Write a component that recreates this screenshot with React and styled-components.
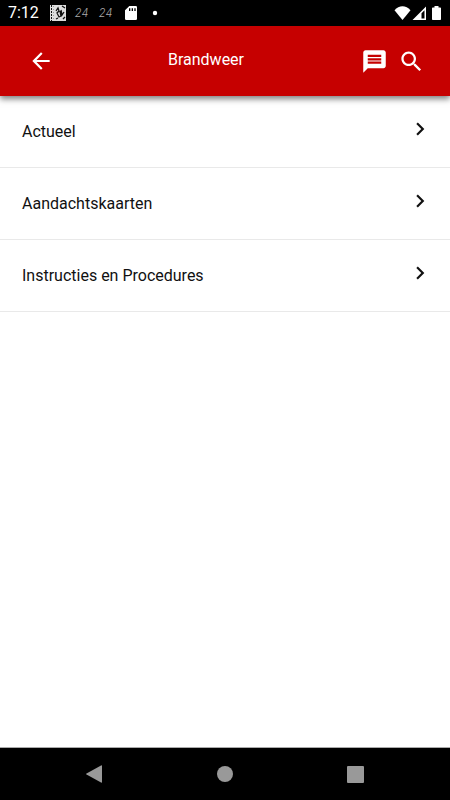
import React from "react";
import styled, { createGlobalStyle } from "styled-components";

const GlobalStyle = createGlobalStyle`
  *, *::before, *::after { box-sizing: border-box; }
  body { margin: 0; background: #fff; font-family: Roboto, "Noto Sans", sans-serif; }
`;

const Screen = styled.div`
  display: flex;
  flex-direction: column;
  min-height: 100vh;
  background: #fff;
`;

const StatusBar = styled.div`
  display: flex;
  align-items: center;
  justify-content: space-between;
  height: 26px;
  padding: 0 6px 0 8px;
  background: #000;
  color: #fff;
`;

const StatusGroup = styled.div`
  display: flex;
  align-items: center;
  gap: ${(p) => p.$gap}px;
`;

const Clock = styled.time`
  font-size: 16px;
  line-height: 28px;
  margin-right: 2px;
`;

const Counter = styled.span`
  width: 15px;
  font-family: Inter, sans-serif;
  font-size: 11px;
  font-style: italic;
  font-weight: 300;
  line-height: 26px;
  color: #aaa;
`;

const AppBar = styled.header`
  display: grid;
  grid-template-columns: 1fr auto 1fr;
  align-items: center;
  height: 70px;
  padding: 0 23px 0 25px;
  background: #c60000;
  color: #fff;
  box-shadow: 0 3px 6px rgba(0, 0, 0, 0.5);
  z-index: 1;
`;

const Title = styled.h1`
  margin: 0;
  padding: 0 40px 2px 0;
  font-size: 16px;
  line-height: 24px;
  font-weight: 400;
`;

const Actions = styled.div`
  display: flex;
  justify-content: flex-end;
  gap: 6px;
`;

const IconButton = styled.button`
  display: grid;
  place-items: center;
  width: 31px;
  height: 40px;
  padding: 0;
  border: 0;
  background: none;
  color: inherit;
  cursor: pointer;
`;

const Icon = styled.svg`
  display: block;
  width: ${(p) => p.$size}px;
  height: ${(p) => p.$size}px;
  fill: currentColor;
`;

const Menu = styled.ul`
  flex: 1;
  margin: 0;
  padding: 0;
  list-style: none;
`;

const MenuItem = styled.li`
  border-bottom: 1px solid #e9e9e9;
`;

const MenuLink = styled.a`
  display: flex;
  align-items: flex-start;
  justify-content: space-between;
  height: 71px;
  padding: 20px 17px 0 22px;
  color: #111;
  text-decoration: none;
`;

const MenuLabel = styled.span`
  font-size: 16px;
  line-height: 32px;
`;

const NavBar = styled.nav`
  display: grid;
  grid-template-columns: repeat(3, 130px);
  justify-content: center;
  justify-items: center;
  align-items: center;
  height: 53px;
  background: #000;
  border-top: 1px solid #aaa;
  color: #999;
`;

const items = ["Actueel", "Aandachtskaarten", "Instructies en Procedures"];

export default function App() {
  return (
    <Screen>
      <GlobalStyle />
      <StatusBar>
        <StatusGroup $gap={9}>
          <Clock>7:12</Clock>
          <Icon $size={16} viewBox="0 0 16 16" aria-hidden="true">
            <path fill="#ddd" d="M0 0h16v16H0z" />
            <g fill="none" stroke="#111">
              <path d="M1.500 0v16" strokeDasharray="2 1" />
              <path d="M3.500 1v14" stroke="#999" strokeDasharray="1 2" />
              <path d="M6 6l2-3 1 3-2 2 2 4 2-1-1-5M11 5l1 5 2-3M12 1l3 2M6 14l2-1M13 14l2-2" strokeWidth="1.300" />
            </g>
          </Icon>
          <Counter>24</Counter>
          <Counter>24</Counter>
          <Icon $size={16} viewBox="0 0 24 24" aria-hidden="true">
            <path d="M19 1.500H9.500L3 8v12.500a2 2 0 0 0 2 2h14a2 2 0 0 0 2-2v-17a2 2 0 0 0-2-2z" />
            <path fill="#000" d="M9 5h2v4H9zM13 5h2v4h-2zM17 5h2v4h-2z" />
          </Icon>
          <Icon $size={14} viewBox="0 0 14 14" aria-hidden="true">
            <circle cx="7" cy="7" r="2.200" />
          </Icon>
        </StatusGroup>
        <StatusGroup $gap={1}>
          <Icon $size={17} viewBox="0 0 17 17" aria-hidden="true">
            <path d="M.5 5.200C5-.1 12-.1 16.500 5.200L8.500 15z" />
          </Icon>
          <Icon $size={15} viewBox="0 0 15 15" aria-hidden="true">
            <path fillRule="evenodd" d="M.5 14L14 .5V14zM9.500 7.200v5.300h3V4.200z" />
          </Icon>
          <Icon $size={16} viewBox="0 0 16 16" aria-hidden="true">
            <path d="M6.500 1h4v1.500h1.700q.8 0 .8.800v10.900q0 .8-.8.800H4.800q-.8 0-.8-.8V3.300q0-.8.800-.8h1.700z" />
          </Icon>
        </StatusGroup>
      </StatusBar>
      <AppBar>
        <IconButton type="button" aria-label="Terug">
          <Icon $size={26} viewBox="0 0 24 24">
            <path d="M20 11H7.830l5.590-5.590L12 4l-8 8 8 8 1.410-1.410L7.830 13H20v-2z" />
          </Icon>
        </IconButton>
        <Title>Brandweer</Title>
        <Actions>
          <IconButton type="button" aria-label="Berichten">
            <Icon $size={27} viewBox="0 0 24 24">
              <path d="M20 2H4c-1.100 0-1.990.9-1.990 2L2 22l4-4h14c1.100 0 2-.9 2-2V4c0-1.100-.9-2-2-2zM6 6h12v2H6V6zm12 8H6v-2h12v2zm0-3H6V9h12v2z" />
            </Icon>
          </IconButton>
          <IconButton type="button" aria-label="Zoeken">
            <Icon $size={27} viewBox="0 0 24 24">
              <path d="M15.500 14h-.79l-.28-.27C15.410 12.590 16 11.110 16 9.500 16 5.910 13.090 3 9.500 3S3 5.910 3 9.500 5.910 16 9.500 16c1.610 0 3.090-.59 4.230-1.570l.27.28v.79l5 4.990L20.490 19l-4.990-5zm-6 0C7.010 14 5 11.990 5 9.500S7.010 5 9.500 5 14 7.010 14 9.500 11.990 14 9.500 14z" />
            </Icon>
          </IconButton>
        </Actions>
      </AppBar>
      <Menu>
        {items.map((label) => (
          <MenuItem key={label}>
            <MenuLink href="#">
              <MenuLabel>{label}</MenuLabel>
              <Icon $size={26} viewBox="0 0 24 24" aria-hidden="true">
                <path d="M10 6L8.590 7.410 13.170 12l-4.580 4.590L10 18l6-6z" />
              </Icon>
            </MenuLink>
          </MenuItem>
        ))}
      </Menu>
      <NavBar>
        <IconButton type="button" aria-label="Vorige">
          <Icon $size={18} viewBox="0 0 18 18">
            <path d="M15 .5q1-.5 1 .5v16q0 1-1 .5L.5 9.500q-.8-.5 0-1z" />
          </Icon>
        </IconButton>
        <IconButton type="button" aria-label="Startscherm">
          <Icon $size={16} viewBox="0 0 16 16">
            <circle cx="8" cy="8" r="8" />
          </Icon>
        </IconButton>
        <IconButton type="button" aria-label="Overzicht">
          <Icon $size={17} viewBox="0 0 17 17">
            <rect width="17" height="17" rx="1" />
          </Icon>
        </IconButton>
      </NavBar>
    </Screen>
  );
}
